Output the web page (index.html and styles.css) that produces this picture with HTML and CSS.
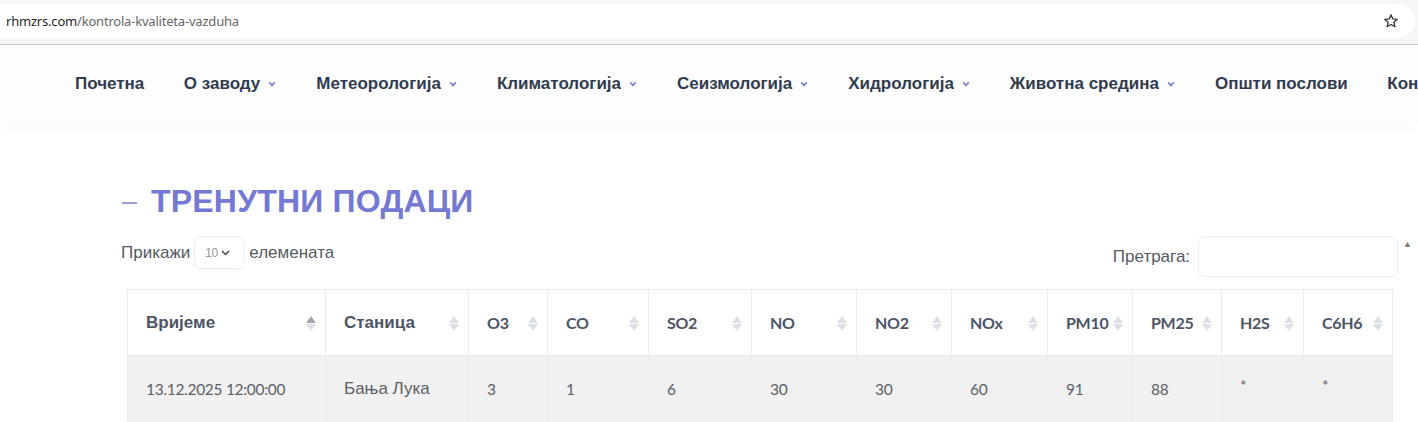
FILE: index.html
```html
<!DOCTYPE html>
<html lang="sr">
<head>
<meta charset="utf-8">
<title>Контрола квалитета ваздуха</title>
<link rel="stylesheet" href="styles.css">
</head>
<body>
<div class="chrome">
  <div class="omnibox">
    <span class="url"><span class="host">rhmzrs.com</span>/kontrola-kvaliteta-vazduha</span>
    <svg class="star" width="16" height="16" viewBox="0 0 16 16"><path d="M8 1.8l1.85 4.1 4.45.45-3.35 3 .95 4.4L8 11.5l-3.9 2.25.95-4.4-3.35-3 4.45-.45z" fill="none" stroke="#333" stroke-width="1.3" stroke-linejoin="round"/></svg>
  </div>
</div>
<nav class="nav">
  <a class="nav-item">Почетна</a>
  <a class="nav-item">О заводу<span class="chev"></span></a>
  <a class="nav-item">Метеорологија<span class="chev"></span></a>
  <a class="nav-item">Климатологија<span class="chev"></span></a>
  <a class="nav-item">Сеизмологија<span class="chev"></span></a>
  <a class="nav-item">Хидрологија<span class="chev"></span></a>
  <a class="nav-item">Животна средина<span class="chev"></span></a>
  <a class="nav-item">Општи послови</a>
  <a class="nav-item">Контакт</a>
</nav>
<main class="content">
  <h2 class="title"><span class="dash"></span>ТРЕНУТНИ ПОДАЦИ</h2>
  <div class="controls">
    <div class="length">Прикажи <span class="select">10<svg width="9" height="6" viewBox="0 0 9 6"><path d="M1 1l3.5 3.5L8 1" fill="none" stroke="#444" stroke-width="1.5"/></svg></span> елемената</div>
    <div class="filter">Претрага: <span class="search"></span><span class="up">▲</span></div>
  </div>
  <table class="data">
    <thead>
      <tr>
        <th class="w1 sorted">Вријеме</th>
        <th class="w2">Станица</th>
        <th class="w3">O3</th>
        <th class="w4">CO</th>
        <th class="w5">SO2</th>
        <th class="w6">NO</th>
        <th class="w7">NO2</th>
        <th class="w8">NOx</th>
        <th class="w9">PM10</th>
        <th class="w10">PM25</th>
        <th class="w11">H2S</th>
        <th class="w12">C6H6</th>
      </tr>
    </thead>
    <tbody>
      <tr>
        <td>13.12.2025 12:00:00</td>
        <td>Бања Лука</td>
        <td>3</td>
        <td>1</td>
        <td>6</td>
        <td>30</td>
        <td>30</td>
        <td>60</td>
        <td>91</td>
        <td>88</td>
        <td class="star-cell">*</td>
        <td class="star-cell">*</td>
      </tr>
    </tbody>
  </table>
</main>
</body>
</html>
```

FILE: styles.css
```css
* { box-sizing: border-box; }
html, body {
  margin: 0;
  padding: 0;
  width: 1418px;
  height: 422px;
  overflow: hidden;
  background: #ffffff;
}
body { font-family: "Liberation Sans", Arial, sans-serif; }

.chrome {
  height: 45px;
  background: #f6f6f6;
  border-bottom: 1px solid #c9c9c9;
  padding: 4px 3px 6px 0;
}
.omnibox {
  height: 34px;
  background: #ffffff;
  border-radius: 0 17px 17px 0;
  display: flex;
  align-items: center;
  justify-content: space-between;
  padding: 0 16px 0 6px;
}
.url {
  font-family: "Noto Sans", "DejaVu Sans", sans-serif;
  font-size: 13px;
  color: #666;
  letter-spacing: -0.2px;
}
.host { color: #1f1f1f; }
.star { display: block; }

.nav {
  height: 78px;
  background: #fdfdfd;
  display: flex;
  align-items: center;
  padding-left: 75px;
  white-space: nowrap;
  overflow: hidden;
  box-shadow: 0 4px 12px rgba(0,0,0,0.025);
  position: relative;
}
.nav-item {
  font-size: 17px;
  font-weight: bold;
  color: #313b50;
  margin-right: 39.5px;
  display: flex;
  align-items: center;
  flex-shrink: 0;
}
.chev {
  width: 6px;
  height: 6px;
  border-right: 2px solid #7a7fd6;
  border-bottom: 2px solid #7a7fd6;
  transform: rotate(45deg) scale(0.8);
  margin-left: 9px;
  margin-top: -3px;
  margin-right: 1.5px;
}

.content {
  padding: 62px 0 0 121px;
}
.title {
  margin: 0;
  display: flex;
  align-items: center;
  font-size: 32px;
  font-weight: bold;
  color: #7479d4;
  height: 32px;
  letter-spacing: 0.2px;
}
.dash {
  width: 15px;
  height: 2px;
  background: #9a9ee0;
  margin: 3px 14px 0 1px;
}
.controls {
  display: flex;
  justify-content: space-between;
  align-items: flex-start;
  margin-top: 19px;
  width: 1291px;
}
.length {
  display: flex;
  align-items: center;
  font-size: 17px;
  color: #555a63;
  height: 33px;
}
.select {
  display: inline-flex;
  align-items: center;
  gap: 3px;
  width: 50px;
  height: 33px;
  border: 1px solid #eceef2;
  border-radius: 6px;
  margin: 0 5px 0 4px;
  padding-left: 10px;
  font-size: 12px;
  color: #9a9a9a;
  letter-spacing: -0.5px;
  box-shadow: 0 2px 6px rgba(0,0,0,0.03);
}
.filter {
  display: flex;
  align-items: center;
  font-size: 17px;
  color: #555a63;
  height: 41px;
  position: relative;
}
.search {
  display: inline-block;
  width: 200px;
  height: 41px;
  border: 1px solid #eceef2;
  border-radius: 6px;
  margin-left: 8px;
  background: #fff;
}
.up {
  font-size: 9px;
  color: #777;
  align-self: flex-start;
  margin: 3px 0 0 5px;
}

.data {
  margin: 12px 0 0 6px;
  border-collapse: collapse;
  table-layout: fixed;
  width: 1265px;
  font-family: "Lato", "Liberation Sans", sans-serif;
}
.data th, .data td {
  border: 1px solid #ececf0;
  text-align: left;
  padding: 0 18px;
}
.data th {
  height: 66px;
  font-size: 16px;
  font-weight: bold;
  color: #4d5565;
  background: #fff;
  position: relative;
  letter-spacing: -0.3px;
}
.data th:first-child, .data th:nth-child(2) {
  font-family: "Liberation Sans", sans-serif;
  font-size: 17px;
  letter-spacing: 0;
}
.data th::after {
  content: "";
  position: absolute;
  right: 9px;
  top: 26px;
  width: 0;
  height: 0;
  border-left: 5px solid transparent;
  border-right: 5px solid transparent;
  border-bottom: 7px solid #dcdfe4;
}
.data th::before {
  content: "";
  position: absolute;
  right: 9px;
  top: 34px;
  width: 0;
  height: 0;
  border-left: 5px solid transparent;
  border-right: 5px solid transparent;
  border-top: 7px solid #dcdfe4;
}
.data th.sorted::after { border-bottom-color: #a3a6ad; }
.data td {
  height: 70px;
  background: #f1f1f1;
  font-size: 15.5px;
  color: #5a5f68;
  padding-bottom: 4px;
  letter-spacing: -0.3px;
}
.data td:nth-child(2) {
  font-family: "Liberation Sans", sans-serif;
  font-size: 17px;
  letter-spacing: 0;
}
.data td.star-cell { padding-bottom: 12px; }

.w1 { width: 198px; }
.w2 { width: 143px; }
.w3 { width: 79px; }
.w4 { width: 101px; }
.w5 { width: 103px; }
.w6 { width: 105px; }
.w7 { width: 95px; }
.w8 { width: 96px; }
.w9 { width: 85px; }
.w10 { width: 89px; }
.w11 { width: 82px; }
.w12 { width: 89px; }
```
